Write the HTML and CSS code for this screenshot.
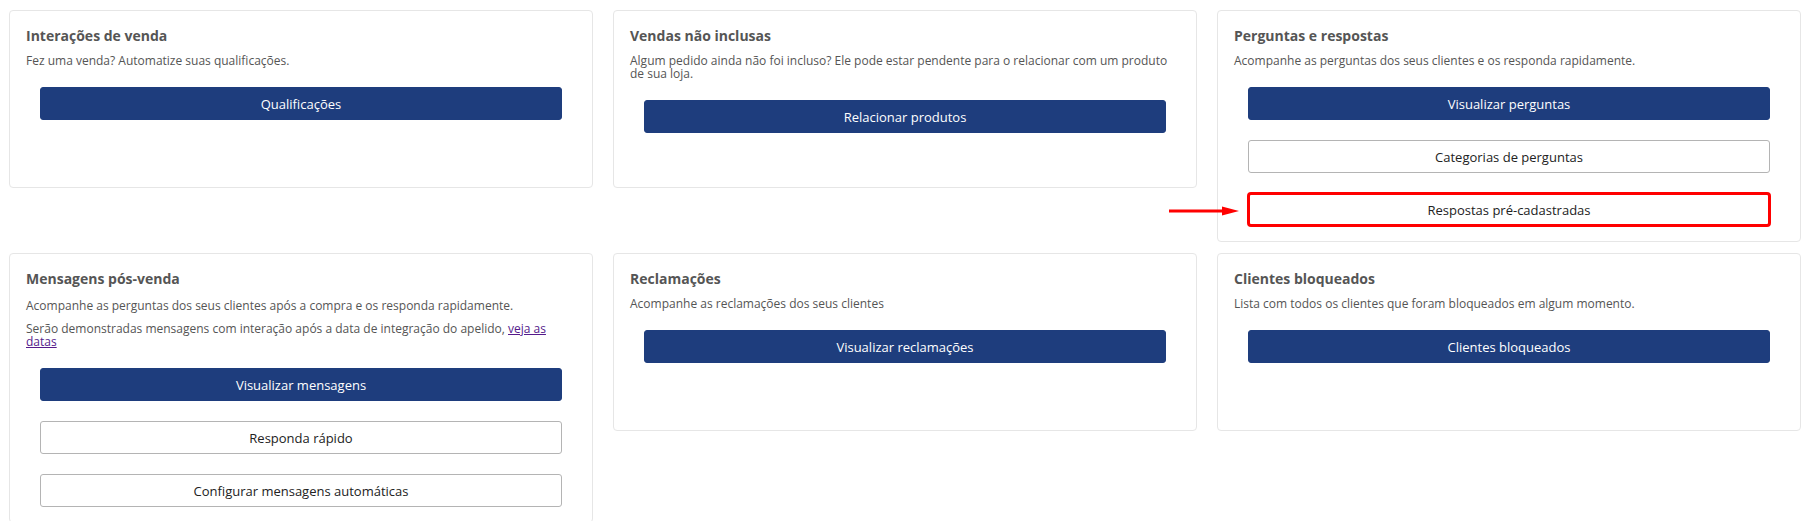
FILE: index.html
```html
<!DOCTYPE html>
<html lang="pt-BR">
<head>
<meta charset="utf-8">
<title>Interações</title>
<link rel="stylesheet" href="styles.css">
</head>
<body>
<div class="grid">
  <section class="card">
    <h2 class="card-title">Interações de venda</h2>
    <p class="card-text">Fez uma venda? Automatize suas qualificações.</p>
    <div class="actions">
      <button class="btn btn-primary">Qualificações</button>
    </div>
  </section>
  <section class="card">
    <h2 class="card-title">Vendas não inclusas</h2>
    <p class="card-text">Algum pedido ainda não foi incluso? Ele pode estar pendente para o relacionar com um produto de sua loja.</p>
    <div class="actions">
      <button class="btn btn-primary">Relacionar produtos</button>
    </div>
  </section>
  <section class="card">
    <h2 class="card-title">Perguntas e respostas</h2>
    <p class="card-text">Acompanhe as perguntas dos seus clientes e os responda rapidamente.</p>
    <div class="actions">
      <button class="btn btn-primary">Visualizar perguntas</button>
      <button class="btn btn-outline">Categorias de perguntas</button>
      <div class="highlight-wrap">
        <svg class="pointer" width="70" height="10" viewBox="0 0 70 10" aria-hidden="true">
          <line x1="0" y1="5" x2="56" y2="5" stroke="#ff0000" stroke-width="3"/>
          <polygon points="53,0.5 70,5 53,9.5" fill="#ff0000"/>
        </svg>
        <button class="btn btn-outline btn-highlight">Respostas pré-cadastradas</button>
      </div>
    </div>
  </section>
  <section class="card card-tall">
    <h2 class="card-title">Mensagens pós-venda</h2>
    <p class="card-text">Acompanhe as perguntas dos seus clientes após a compra e os responda rapidamente.</p>
    <p class="card-text">Serão demonstradas mensagens com interação após a data de integração do apelido, <a href="#" class="link">veja as datas</a></p>
    <div class="actions">
      <button class="btn btn-primary">Visualizar mensagens</button>
      <button class="btn btn-outline">Responda rápido</button>
      <button class="btn btn-outline">Configurar mensagens automáticas</button>
    </div>
  </section>
  <section class="card">
    <h2 class="card-title">Reclamações</h2>
    <p class="card-text">Acompanhe as reclamações dos seus clientes</p>
    <div class="actions">
      <button class="btn btn-primary">Visualizar reclamações</button>
    </div>
  </section>
  <section class="card">
    <h2 class="card-title">Clientes bloqueados</h2>
    <p class="card-text">Lista com todos os clientes que foram bloqueados em algum momento.</p>
    <div class="actions">
      <button class="btn btn-primary">Clientes bloqueados</button>
    </div>
  </section>
</div>
</body>
</html>
```
FILE: styles.css
```css
* { box-sizing: border-box; }
html, body { overflow: hidden; }
body {
  margin: 0;
  background: #ffffff;
  font-family: "Open Sans", "Liberation Sans", Arial, sans-serif;
  color: #555555;
}
.grid {
  display: grid;
  grid-template-columns: repeat(3, 1fr);
  column-gap: 20px;
  row-gap: 11px;
  align-items: start;
  padding: 10px 0 0 9px;
}
.card {
  border: 1px solid #e6e6e6;
  border-radius: 4px;
  background: #fff;
  min-height: 178px;
  padding: 15px 16px 15px 16px;
}
.card-title {
  margin: 0 0 8px 0;
  font-size: 14px;
  line-height: 20px;
  font-weight: 700;
  color: #555555;
}
.card-tall .card-title { margin-bottom: 10px; }
.card-text {
  margin: 0 0 10px 0;
  font-size: 12px;
  line-height: 13px;
  color: #555555;
}
.link { color: #551a8b; text-decoration: underline; }
.actions {
  display: flex;
  flex-direction: column;
  gap: 20px;
  margin: 20px 14px 0 14px;
}
.btn {
  display: block;
  width: 100%;
  height: 33px;
  border-radius: 3px;
  font-family: "Open Sans", "Liberation Sans", Arial, sans-serif;
  font-size: 13px;
  cursor: pointer;
}
.btn-primary {
  background: #1e3d7d;
  border: 1px solid #1e3d7d;
  color: #ffffff;
}
.btn-outline {
  background: #ffffff;
  border: 1px solid #b4b4b4;
  color: #222222;
}
.highlight-wrap { position: relative; }
.btn-highlight {
  outline: 3px solid #ff0000;
  outline-offset: -2px;
}
.pointer {
  position: absolute;
  left: -79px;
  top: 13px;
}
```
